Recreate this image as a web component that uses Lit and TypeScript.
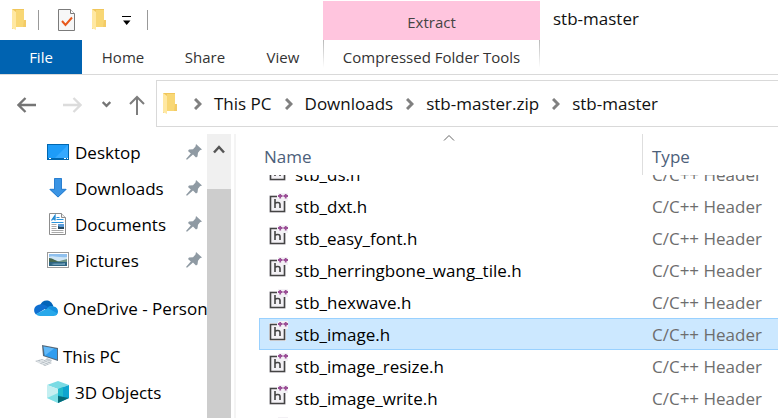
import { LitElement, html, svg, css, nothing } from "lit";
import { customElement, property, query, state } from "lit/decorators.js";
import { classMap } from "lit/directives/class-map.js";

const folder = html`
  <svg width="14" height="22" viewBox="0 0 14 22" aria-hidden="true">
    <path d="M0 0h12v11h2v7H4l-4 2z" fill="#f0c65b" />
    <path d="M4 1h8v10h2v7H4z" fill="#f8d775" />
    <path d="M0 0l4 3v18l-4-2z" fill="#ffe8a2" />
    <path d="M12 11h2v7h-3z" fill="#f3cb66" />
  </svg>`;

const chevron = html`
  <svg width="8" height="12" viewBox="0 0 8 12" aria-hidden="true">
    <path d="M1 1l5 5-5 5" fill="none" stroke="#808080" stroke-width="3" />
  </svg>`;

const placeIcons: Record<string, unknown> = {
  desktop: svg`
    <rect x="1" y="4" width="22" height="16" fill="#0067b0"/>
    <rect x="2" y="5" width="20" height="13" fill="#1e9cf8"/>
    <path d="M22 5v13H9z" fill="#35a9ff"/>
    <path d="M3 18.500h2M18 18.500h2M21 18.500h1" stroke="#fff"/>`,
  downloads: svg`
    <path d="M8.500 2h7v11H21L12 21.500 3 13h5.500z" fill="#3a94e4"/>
    <path d="M8.500 2.500h7v10.800H20L12 21 4 13.300h4.500z" fill="none" stroke="#2a7fd0" stroke-width="1"/>`,
  documents: svg`
    <path d="M3.500 1.500h12l4 4v17h-16z" fill="#fff" stroke="#8d8d8d"/>
    <path d="M15.500 1.500v4h4" fill="#eee" stroke="#8d8d8d"/>
    <path d="M5.500 8.500L9 3.500v5M6.500 7H9" fill="none" stroke="#1c86d1" stroke-width="1.300"/>
    <path d="M10.500 5.500h3M10.500 7.500h7M5.500 10.500h12" stroke="#2b94dc"/>
    <path d="M5.500 12.500h5M5.500 14.500h5M5.500 16.500h5M5.500 18.500h12M5.500 20.500h12" stroke="#aaa"/>
    <rect x="12" y="12" width="6" height="5" fill="#5a9bd8"/>
    <path d="M12 17v-3l2 1h4v2z" fill="#25485f"/>`,
  pictures: svg`
    <rect x="1.500" y="4.500" width="21" height="15" fill="#fff" stroke="#9a9a9a"/>
    <rect x="3" y="6" width="18" height="12" fill="#8fc0ee"/>
    <path d="M3 9c4-2 9 1 18 0v4H3z" fill="#cfe5f5"/>
    <path d="M3 10c4 0 6 3 12 4H3z" fill="#47684f"/>
    <path d="M10 14l11-3v3z" fill="#6e9486"/>
    <path d="M3 14h18v4H3z" fill="#2d6482"/>
    <path d="M5 16c5-1 9 0 14-1v2H8z" fill="#6f9fba"/>`,
  onedrive: svg`
    <path d="M6 9.500C8 3 17 2 19.500 10.500L12 14z" fill="#0364b8"/>
    <path d="M6 8.500c3-.5 5 .5 8 2.500L2 18.500C-1.500 15 0 9 6 8.500z" fill="#0f6fd0"/>
    <path d="M13 12c2-2 4-2.500 6.500-1.500 3 .3 4.500 2.500 4.500 5 0 2-1 3-2 3.500z" fill="#1490df"/>
    <path d="M2 18L14 12l9.500 5.500c-1 1.800-2 2.500-4 2.500H6c-2 0-3-.7-4-2z" fill="#28a8ea"/>`,
  pc: svg`
    <path d="M8 1l16 3v13L9 12z" fill="#56697a"/>
    <path d="M9.500 2.500L23 5v10.500L10.500 11.500z" fill="#2f9df0"/>
    <path d="M9.500 2.500L20 4.500 11 11.500z" fill="#62b9f8"/>
    <path d="M13 14l5 2-1 2-6-2z" fill="#c4ccd2"/>
    <path d="M1 17l7-2 10 4-7 3z" fill="#b6bec5"/>
    <path d="M3 17l10 4M6 16l10 4M4 19l6-3M8 20.500l6-3" stroke="#eef1f3" stroke-width=".8"/>`,
  objects: svg`
    <path d="M12 1l11 4-11 4L1 5z" fill="#7adbe4"/>
    <path d="M1 5l11 4v14L1 18z" fill="#c4eff1"/>
    <path d="M1 18l11-5v10z" fill="#7ee0e6"/>
    <path d="M23 5l-11 4v14l11-5z" fill="#0ea5cf"/>
    <path d="M12 9l5-2v10l-5-2z" fill="#22bccb"/>
    <path d="M12 16l11 2-11 5z" fill="#046a76"/>`,
};

interface Place {
  icon: string;
  label: string;
  level: number;
  pinned?: boolean;
  section?: boolean;
}

const places: Place[] = [
  { icon: "desktop", label: "Desktop", level: 1, pinned: true },
  { icon: "downloads", label: "Downloads", level: 1, pinned: true },
  { icon: "documents", label: "Documents", level: 1, pinned: true },
  { icon: "pictures", label: "Pictures", level: 1, pinned: true },
  { icon: "onedrive", label: "OneDrive - Person", level: 0, section: true },
  { icon: "pc", label: "This PC", level: 0, section: true },
  { icon: "objects", label: "3D Objects", level: 1 },
];

const files = [
  "stb_ds.h",
  "stb_dxt.h",
  "stb_easy_font.h",
  "stb_herringbone_wang_tile.h",
  "stb_hexwave.h",
  "stb_image.h",
  "stb_image_resize.h",
  "stb_image_write.h",
  "stb_include.h",
];

const reset = css`
  * { box-sizing: border-box; }
  svg { display: block; flex: none; }
  button {
    font: inherit; color: inherit; background: none;
    border: 0; padding: 0; margin: 0; white-space: nowrap;
  }
`;

@customElement("title-strip")
export class TitleStrip extends LitElement {
  static styles = [reset, css`
    :host { display: grid; grid-template-columns: 323px 217px 1fr;
      grid-template-rows: 40px 34px; border-bottom: 1px solid #d9d9d9; }
    .quick { display: flex; align-items: center; padding-left: 12px; }
    .bar { width: 1px; height: 20px; background: #999; }
    .quick .bar:first-of-type { margin: 0 19px 0 12px; }
    .tools { display: flex; align-items: center; gap: 16px; }
    .quick .last { margin-left: 16px; }
    .context { background: #ffc5de; margin-top: 1px; padding-top: 3px; display: grid; place-items: center;
      font-size: 15px; color: #444; }
    .title { padding: 7px 13px; font-size: 17px; line-height: 24px; color: #111; }
    .tabs { display: flex; }
    .tab { font-size: 15px; line-height: 34px; color: #333; flex: 0 0 82px; }
    .file { background: #0063b1; color: #fff; }
    .view { flex-basis: 74px; }
    .extract { border: 1px solid; border-width: 0 1px;
      border-image: linear-gradient(#b5b5b5, #ffffff 80%) 1; }
  `];

  render() {
    return html`
      <div class="quick">
        ${folder}
        <span class="bar"></span>
        <div class="tools">
          <button aria-label="Properties">
            <svg width="18" height="22" viewBox="0 0 18 22">
              <path d="M.5.5h12l4 4v17H.5z" fill="#f7f7f7" stroke="#7b7b7b" />
              <path d="M12.500.5v4h4" fill="#fff" stroke="#7b7b7b" />
              <path d="M4 12l3.500 4L14 8.500" fill="none" stroke="#e8591c" stroke-width="2" />
            </svg>
          </button>
          <button aria-label="New folder">${folder}</button>
          <button aria-label="Customize Quick Access Toolbar">
            <svg width="9" height="9" viewBox="0 0 9 9"><path d="M0 0h9v1H0zM1 4.500h7.500L4.700 9z" /></svg>
          </button>
        </div>
        <span class="bar last"></span>
      </div>
      <div class="context">Extract</div>
      <div class="title">stb-master</div>
      <div class="tabs">
        <button class="tab file">File</button>
        <button class="tab">Home</button>
        <button class="tab">Share</button>
        <button class="tab view">View</button>
      </div>
      <button class="tab extract">Compressed Folder Tools</button>
    `;
  }
}

@customElement("address-bar")
export class AddressBar extends LitElement {
  @property({ type: Array }) path: string[] = [];

  static styles = [reset, css`
    :host { display: flex; height: 52px; padding-top: 5px; }
    .arrows { flex: 0 0 156px; display: flex; align-items: center; padding: 2px 0 0 17px; }
    .forward { margin-left: 27px; }
    .recent { margin-left: 20px; }
    .up { margin-left: 18px; }
    .crumbs { flex: 1; display: flex; align-items: center; min-width: 0; gap: 13px;
      border: 1px solid #d9d9d9; border-right: 0; padding-left: 6px; }
    .crumb { display: flex; align-items: center; gap: 12px; font-size: 17px; color: #111; }
    .first { margin-left: 4px; }
  `];

  render() {
    return html`
      <div class="arrows">
        <button aria-label="Back">
          <svg width="19" height="16" viewBox="0 0 19 16"><path d="M19 8H2M8.500 1L1.500 8l7 7" fill="none" stroke="#757575" stroke-width="2.300" /></svg>
        </button>
        <button class="forward" aria-label="Forward" disabled>
          <svg width="19" height="16" viewBox="0 0 19 16"><path d="M0 8h17M10.500 1l7 7-7 7" fill="none" stroke="#dcdcdc" stroke-width="2.300" /></svg>
        </button>
        <button class="recent" aria-label="Recent locations">
          <svg width="9" height="7" viewBox="0 0 9 7"><path d="M.7 1l3.800 3.800L8.300 1" fill="none" stroke="#757575" stroke-width="2.300" /></svg>
        </button>
        <button class="up" aria-label="Up">
          <svg width="16" height="20" viewBox="0 0 16 20"><path d="M8 20V2M1 9l7-7 7 7" fill="none" stroke="#7d7d7d" stroke-width="2" /></svg>
        </button>
      </div>
      <div class="crumbs">
        ${folder}
        ${this.path.map((name, i) => html`
          <span class=${classMap({ crumb: true, first: i === 0 })}>${chevron}<button>${name}</button></span>`)}
      </div>
    `;
  }
}

@customElement("places-pane")
export class PlacesPane extends LitElement {
  static styles = [reset, css`
    :host { display: flex; overflow: hidden; border-right: 2px solid #f4f4f4; }
    nav { flex: 1; min-width: 0; overflow: hidden; }
    ul { list-style: none; margin: 0; padding: 0; }
    .place { display: flex; align-items: center; gap: 5px; height: 36px; padding-left: 34px;
      font-size: 17px; color: #000; text-decoration: none; white-space: nowrap; }
    .nested { padding-left: 46px; }
    .section { margin-top: 12px; }
    .name { flex: 1; }
    .pin { margin-right: 5px; }
    .scroll { flex: 0 0 27px; padding-right: 3px; display: flex; flex-direction: column; background: #fff; }
    .step { height: 55px; background: #f0f0f0; display: flex; justify-content: center; padding-top: 10px; }
    .thumb { flex: 1; background: #cdcdcd; }
  `];

  render() {
    return html`
      <nav aria-label="Places">
        <ul>
          ${places.map((p) => html`
            <li class=${classMap({ section: !!p.section })}>
              <a class=${classMap({ place: true, nested: p.level === 1 })} href="#">
                <svg width="24" height="24" viewBox="0 0 24 24" aria-hidden="true">${placeIcons[p.icon]}</svg>
                <span class="name">${p.label}</span>
                ${p.pinned ? html`
                  <svg class="pin" width="16" height="16" viewBox="0 0 16 16" aria-label="Pinned">
                    <path d="M10 0l6 5.500-2 .8-2 2.400-.5 3.800-1.500 1-3-3L1 15.800 0 15l4.800-5.500L2 7l1-1.500 4-.3L9.500 2.500z" fill="#8f9aa3" />
                  </svg>` : nothing}
              </a>
            </li>`)}
        </ul>
      </nav>
      <div class="scroll">
        <button class="step" aria-label="Scroll up">
          <svg width="12" height="10" viewBox="0 0 12 10"><path d="M1 8.500l5-5.500 5 5.500" fill="none" stroke="#555" stroke-width="2.500" /></svg>
        </button>
        <div class="thumb"></div>
      </div>
    `;
  }
}

@customElement("file-list")
export class FileList extends LitElement {
  @state() private selected = "stb_image.h";
  @query(".view") private view!: HTMLElement;

  static styles = [reset, css`
    :host { display: block; min-width: 0; min-height: 0; padding-left: 23px; }
    .view { height: 100%; overflow-y: auto; scrollbar-width: none; }
    table { width: 100%; border-collapse: separate; border-spacing: 0; table-layout: fixed; font-size: 17px; }
    th { position: sticky; top: 0; z-index: 1; height: 41px; background: #fff; padding: 0 0 0 5px;
      text-align: left; font-weight: 400; color: #4c607a; }
    .col-name { width: 384px; border-right: 1px solid #dedede; }
    .col-type { padding-left: 9px; }
    .head { display: block; padding-top: 3px; }
    .sort { position: absolute; top: 0; left: 50%; margin-left: -8px; }
    td { padding: 0; white-space: nowrap; border: 1px solid transparent; border-width: 1px 0; }
    .entry { display: flex; gap: 7px; padding-left: 10px; height: 30px; line-height: 32px; color: #000; }
    .entry svg { margin-top: 2px; }
    .type { padding-left: 9px; height: 30px; line-height: 32px; color: #6d6d6d; }
    .selected td { background: #cce8ff; border-color: #99d1ff; }
    .selected td:first-child { border-left-width: 1px; }
    .selected .entry { padding-left: 9px; }
  `];

  firstUpdated() {
    this.view.scrollTop = 17;
  }

  render() {
    return html`
      <div class="view">
        <table>
          <thead>
            <tr>
              <th class="col-name" scope="col" aria-sort="ascending">
                <svg class="sort" width="12" height="8" viewBox="0 0 12 8" aria-hidden="true"><path d="M1 6.500L6 1.500l5 5" fill="none" stroke="#666" /></svg>
                <button class="head">Name</button>
              </th>
              <th class="col-type" scope="col"><button class="head">Type</button></th>
            </tr>
          </thead>
          <tbody>
            ${files.map((name) => html`
              <tr class=${classMap({ selected: name === this.selected })} @click=${() => (this.selected = name)}>
                <td>
                  <div class="entry">
                    <svg width="19" height="22" viewBox="0 0 19 22" aria-hidden="true">
                      <path d="M0 2h9V0h10v8h-2v12H0z" fill="#f3f1f5" />
                      <path d="M8 3.500H1.500v15h14V8" fill="none" stroke="#444" stroke-width="1.600" />
                      <path d="M6 6v9M6 10.500c1-1.300 5-1.800 5 1V15" fill="none" stroke="#444" stroke-width="1.600" />
                      <path d="M9 3h4.500M11.200 1v4.500M14.500 3H19M16.700 1v4.500" stroke="#9b4f96" stroke-width="1.800" />
                    </svg>
                    <span>${name}</span>
                  </div>
                </td>
                <td><div class="type">C/C++ Header</div></td>
              </tr>`)}
          </tbody>
        </table>
      </div>
    `;
  }
}

@customElement("app-root")
export class AppRoot extends LitElement {
  static styles = [reset, css`
    :host { display: flex; flex-direction: column; height: 100vh; overflow: hidden; background: #fff;
      font-family: "Open Sans", "Noto Sans", sans-serif; }
    .body { flex: 1; min-height: 0; display: grid; grid-template-columns: 236px minmax(0, 1fr);
      grid-template-rows: minmax(0, 1fr); padding-top: 7px; }
  `];

  render() {
    return html`
      <title-strip></title-strip>
      <address-bar .path=${["This PC", "Downloads", "stb-master.zip", "stb-master"]}></address-bar>
      <div class="body">
        <places-pane></places-pane>
        <file-list></file-list>
      </div>
    `;
  }
}
